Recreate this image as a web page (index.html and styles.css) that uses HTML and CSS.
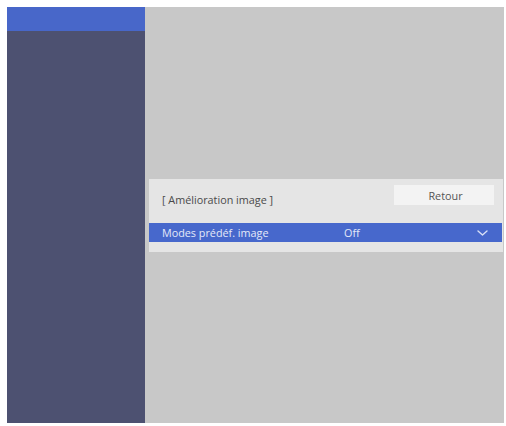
FILE: index.html
```html
<!DOCTYPE html>
<html lang="fr">
<head>
<meta charset="utf-8">
<title>Amélioration image</title>
<link rel="stylesheet" href="styles.css">
</head>
<body>
<div class="frame">
  <aside class="sidebar">
    <div class="sidebar-active"></div>
  </aside>
  <main class="main">
    <section class="panel">
      <div class="panel-head">
        <span class="panel-title">[ Amélioration image ]</span>
        <button class="btn-back" type="button">Retour</button>
      </div>
      <div class="row row-selected">
        <span class="row-label">Modes prédéf. image</span>
        <span class="row-value">Off</span>
        <svg class="chevron" width="11" height="6" viewBox="0 0 11 6"><path d="M1 1 L5.5 5 L10 1" fill="none" stroke="#d8e0f6" stroke-width="1.4" stroke-linecap="round" stroke-linejoin="round"/></svg>
      </div>
    </section>
  </main>
</div>
</body>
</html>
```
FILE: styles.css
```css
html, body {
  margin: 0;
  padding: 0;
  background: #ffffff;
}
body {
  font-family: "Open Sans", "Noto Sans", "Liberation Sans", sans-serif;
}
.frame {
  margin: 7px 0 0 7px;
  width: 497px;
  height: 416px;
  display: flex;
}
.sidebar {
  width: 138px;
  flex: none;
  background: #4d5171;
}
.sidebar-active {
  height: 24px;
  background: #4867c9;
}
.main {
  flex: 1;
  background: #c8c8c8;
  padding: 172px 1px 0 4px;
}
.panel {
  background: #e5e5e5;
  padding-bottom: 10px;
}
.panel-head {
  height: 44px;
  display: flex;
  align-items: flex-start;
  justify-content: space-between;
  padding: 0 9px 0 13px;
}
.panel-title {
  font-size: 10.8px;
  color: #4a4a4a;
  margin-top: 13px;
}
.btn-back {
  margin-top: 6px;
  width: 100px;
  height: 20px;
  border: none;
  background: #f3f3f3;
  color: #555555;
  font-family: inherit;
  font-size: 10.8px;
  padding: 0 0 0 3px;
}
.row {
  height: 19px;
  display: flex;
  align-items: center;
  padding-left: 13px;
  margin-right: 1px;
  font-size: 10.8px;
}
.row-selected {
  background: #4768cc;
  color: #e4e9f8;
}
.row-label {
  width: 182px;
}
.row-value {
  flex: 1;
}
.chevron {
  margin-right: 14px;
}
```
